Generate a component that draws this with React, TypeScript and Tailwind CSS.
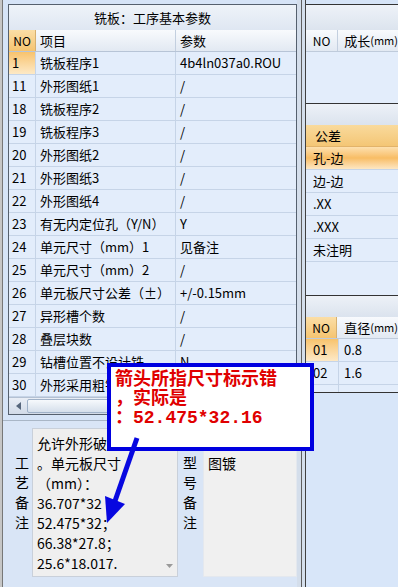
import React from 'react';

const rows: [string, string, string][] = [
  ['1', '铣板程序1', '4b4ln037a0.ROU'],
  ['11', '外形图纸1', '/'],
  ['18', '铣板程序2', '/'],
  ['19', '铣板程序3', '/'],
  ['20', '外形图纸2', '/'],
  ['21', '外形图纸3', '/'],
  ['22', '外形图纸4', '/'],
  ['23', '有无内定位孔（Y/N）', 'Y'],
  ['24', '单元尺寸（mm）1', '见备注'],
  ['25', '单元尺寸（mm）2', '/'],
  ['26', '单元板尺寸公差（±）', '+/-0.15mm'],
  ['27', '异形槽个数', '/'],
  ['28', '叠层块数', '/'],
  ['29', '钻槽位置不设计铣', 'N'],
  ['30', '外形采用粗铣', ''],
];

const tolerances = ['孔-边', '边-边', '.XX', '.XXX', '未注明'];

const memoLines = ['允许外形破损', '。单元板尺寸', '（mm）：', '36.707*32', '52.475*32；', '66.38*27.8；', '25.6*18.017.'];

function ParamTable() {
  return (
    <div className="ml-[5px] mt-[4px] flex h-[411px] w-[289px] shrink-0 flex-col border border-[#55606e] bg-[#e3edfb]">
      <div className="flex h-[25px] shrink-0 items-center justify-center bg-gradient-to-b from-[#eef3f9] to-[#dfe7f2]">
        铣板：工序基本参数
      </div>
      <div className="flex h-[22px] shrink-0 border-b border-[#b7c4d6] bg-gradient-to-b from-[#f8fafd] to-[#e2e9f2]">
        <div className="flex w-[27px] items-center justify-center border-r border-[#d6b070] bg-gradient-to-b from-[#fbdea6] to-[#f5c470] text-[12px]">
          NO
        </div>
        <div className="flex w-[140px] items-center border-r border-[#c3cfdf] pl-[4px]">项目</div>
        <div className="flex flex-1 items-center pl-[4px]">参数</div>
      </div>
      {rows.map(([no, name, value], i) => (
        <div key={no} className="flex h-[23px] shrink-0 border-b border-[#c6d4e7]">
          <div
            className={
              i === 0
                ? 'flex w-[27px] items-center border-r border-[#c6d4e7] bg-gradient-to-b from-[#f8c36c] to-[#fde9c6] pl-[3px]'
                : 'flex w-[27px] items-center border-r border-[#c6d4e7] pl-[3px]'
            }
          >
            {no}
          </div>
          <div className="flex w-[140px] items-center overflow-hidden whitespace-nowrap border-r border-[#c6d4e7] pl-[4px]">
            {name}
          </div>
          <div className="flex flex-1 items-center whitespace-nowrap pl-[4px]">{value}</div>
        </div>
      ))}
      <div className="flex h-[17px] shrink-0 items-stretch border-t border-[#b4c1d3] bg-gradient-to-b from-[#e9eef6] to-[#d2dbe8]">
        <div className="flex w-[18px] items-center justify-center">
          <svg width="5" height="8" viewBox="0 0 5 8">
            <path d="M5 0 L0 4 L5 8Z" fill="#56667c" />
          </svg>
        </div>
        <div className="my-[1px] w-[220px] rounded-[2px] border border-[#9fb1c8] bg-gradient-to-b from-[#f6f9fc] to-[#d5dfeb]" />
      </div>
    </div>
  );
}

function Memo() {
  return (
    <div className="mt-[5px] flex flex-1 border-t border-[#a9b6c6] bg-[#d9e5f6] text-[14px] leading-[20px]">
      <div className="w-[29px] pl-[12px] pt-[31px]">
        <div>工</div>
        <div>艺</div>
        <div>备</div>
        <div>注</div>
      </div>
      <div className="mt-[7px] flex h-[149px] w-[146px] border border-[#c9d0da] bg-[#efefef]">
        <div className="flex-1 whitespace-nowrap pl-[4px] pt-[4px]">
          {memoLines.map((l) => (
            <div key={l}>{l}</div>
          ))}
        </div>
        <div className="flex w-[16px] flex-col items-center justify-end pb-[8px]">
          <svg width="7" height="4" viewBox="0 0 7 4">
            <path d="M0 0 L7 0 L3.5 4Z" fill="#9a9a9a" />
          </svg>
        </div>
      </div>
      <div className="w-[25px] pl-[5px] pt-[31px]">
        <div>型</div>
        <div>号</div>
        <div>备</div>
        <div>注</div>
      </div>
      <div className="mt-[27px] h-[129px] w-[94px] border border-[#e4e8ee] bg-[#f0f0f0] pl-[4px] pt-[4px]">
        图镀
      </div>
    </div>
  );
}

function Splitter() {
  return (
    <div className="flex h-full w-[8px] shrink-0">
      <div className="w-[4px] bg-[#d4deeb]" />
      <div className="w-[1px] bg-[#5e5e5e]" />
      <div className="w-[3px] bg-[#d4deeb]" />
    </div>
  );
}

function RightPanels() {
  return (
    <div className="flex h-full w-[93px] shrink-0 flex-col border-l border-[#404040]">
      {/* 成长 */}
      <div className="mt-[4px] flex h-[100px] shrink-0 flex-col border-y border-[#333]">
        <div className="h-[25px] shrink-0 bg-gradient-to-b from-[#eef2f8] to-[#dce4ee]" />
        <div className="flex h-[22px] shrink-0 border-b border-[#bfcbdb] bg-gradient-to-b from-[#f8fafd] to-[#e2e9f2]">
          <div className="flex w-[33px] items-center justify-center border-r border-[#c3cfdf] text-[12px]">NO</div>
          <div className="flex flex-1 items-center whitespace-nowrap pl-[6px]">
            成长<span className="text-[11px]">(mm)</span>
          </div>
        </div>
        <div className="flex-1 bg-[#e3edfb]" />
      </div>
      {/* 公差 */}
      <div className="flex h-[192px] shrink-0 flex-col border-b border-[#333]">
        <div className="h-[21px] shrink-0 bg-gradient-to-b from-[#edf1f7] to-[#dbe3ee]" />
        <div className="flex h-[22px] shrink-0 items-center border-b border-[#e2b36a] bg-gradient-to-b from-[#f9da9c] to-[#f4c675] pl-[9px]">
          公差
        </div>
        {tolerances.map((t, i) => (
          <div
            key={t}
            className={
              i === 0
                ? 'flex h-[23px] shrink-0 items-center border-b border-[#c6d4e7] bg-gradient-to-b from-[#fde0ae] via-[#f8bd64] to-[#fde7c3] pl-[7px]'
                : 'flex h-[23px] shrink-0 items-center border-b border-[#c6d4e7] bg-[#e3edfb] pl-[7px]'
            }
          >
            {t}
          </div>
        ))}
        <div className="flex-1 bg-[#e3edfb]" />
      </div>
      {/* 直径 */}
      <div className="flex h-[97px] shrink-0 flex-col border-b border-[#333]">
        <div className="h-[21px] shrink-0 bg-gradient-to-b from-[#edf1f7] to-[#dbe3ee]" />
        <div className="flex h-[22px] shrink-0 border-b border-[#bfcbdb] bg-gradient-to-b from-[#f8fafd] to-[#e2e9f2]">
          <div className="flex w-[33px] items-center justify-center border-r border-[#d6b070] bg-gradient-to-b from-[#fbdea6] to-[#f5c470] text-[12px]">
            NO
          </div>
          <div className="flex flex-1 items-center whitespace-nowrap pl-[7px]">
            直径<span className="text-[11px]">(mm)</span>
          </div>
        </div>
        {[
          ['01', '0.8'],
          ['02', '1.6'],
        ].map(([no, d], i) => (
          <div key={no} className="flex h-[23px] shrink-0 border-b border-[#c6d4e7] bg-[#e3edfb]">
            <div
              className={
                i === 0
                  ? 'flex w-[33px] items-center border-r border-[#c6d4e7] bg-gradient-to-b from-[#f8c36c] to-[#fde9c6] pl-[7px]'
                  : 'flex w-[33px] items-center border-r border-[#c6d4e7] pl-[7px]'
              }
            >
              {no}
            </div>
            <div className="flex flex-1 items-center pl-[5px]">{d}</div>
          </div>
        ))}
        <div className="flex flex-1 bg-[#e3edfb]">
          <div className="w-[33px] border-r border-[#c6d4e7]" />
        </div>
      </div>
      <div className="flex-1 bg-[#d8e6f9]" />
    </div>
  );
}

export default function App() {
  return (
    <div className="relative flex h-[587px] w-[398px] overflow-hidden bg-[#d6e4f7] font-['Noto_Sans_CJK_SC',sans-serif] text-[13px] text-black">
      <div className="h-full w-[3px] shrink-0 border-r border-[#777] bg-[#c6c6c6]" />
      <div className="flex w-[294px] shrink-0 flex-col">
        <ParamTable />
        <Memo />
      </div>
      <Splitter />
      <RightPanels />

      {/* 标注框 */}
      <div className="absolute left-[107px] top-[363px] h-[88px] w-[207px] border-[4px] border-[#0000e0] bg-white pl-[4px] pt-[4px] font-['Liberation_Mono','Noto_Sans_CJK_SC',monospace] text-[18px] font-bold leading-[19px] text-[#e00000]">
        <div>箭头所指尺寸标示错</div>
        <div>，实际是</div>
        <div>：52.475*32.16</div>
      </div>
      <svg className="pointer-events-none absolute left-0 top-0" width="398" height="587" viewBox="0 0 398 587">
        <line x1="137" y1="438" x2="115" y2="501" stroke="#0808e0" strokeWidth="5" />
        <polygon points="107,523 105,496 125,504" fill="#0808e0" />
      </svg>
    </div>
  );
}
